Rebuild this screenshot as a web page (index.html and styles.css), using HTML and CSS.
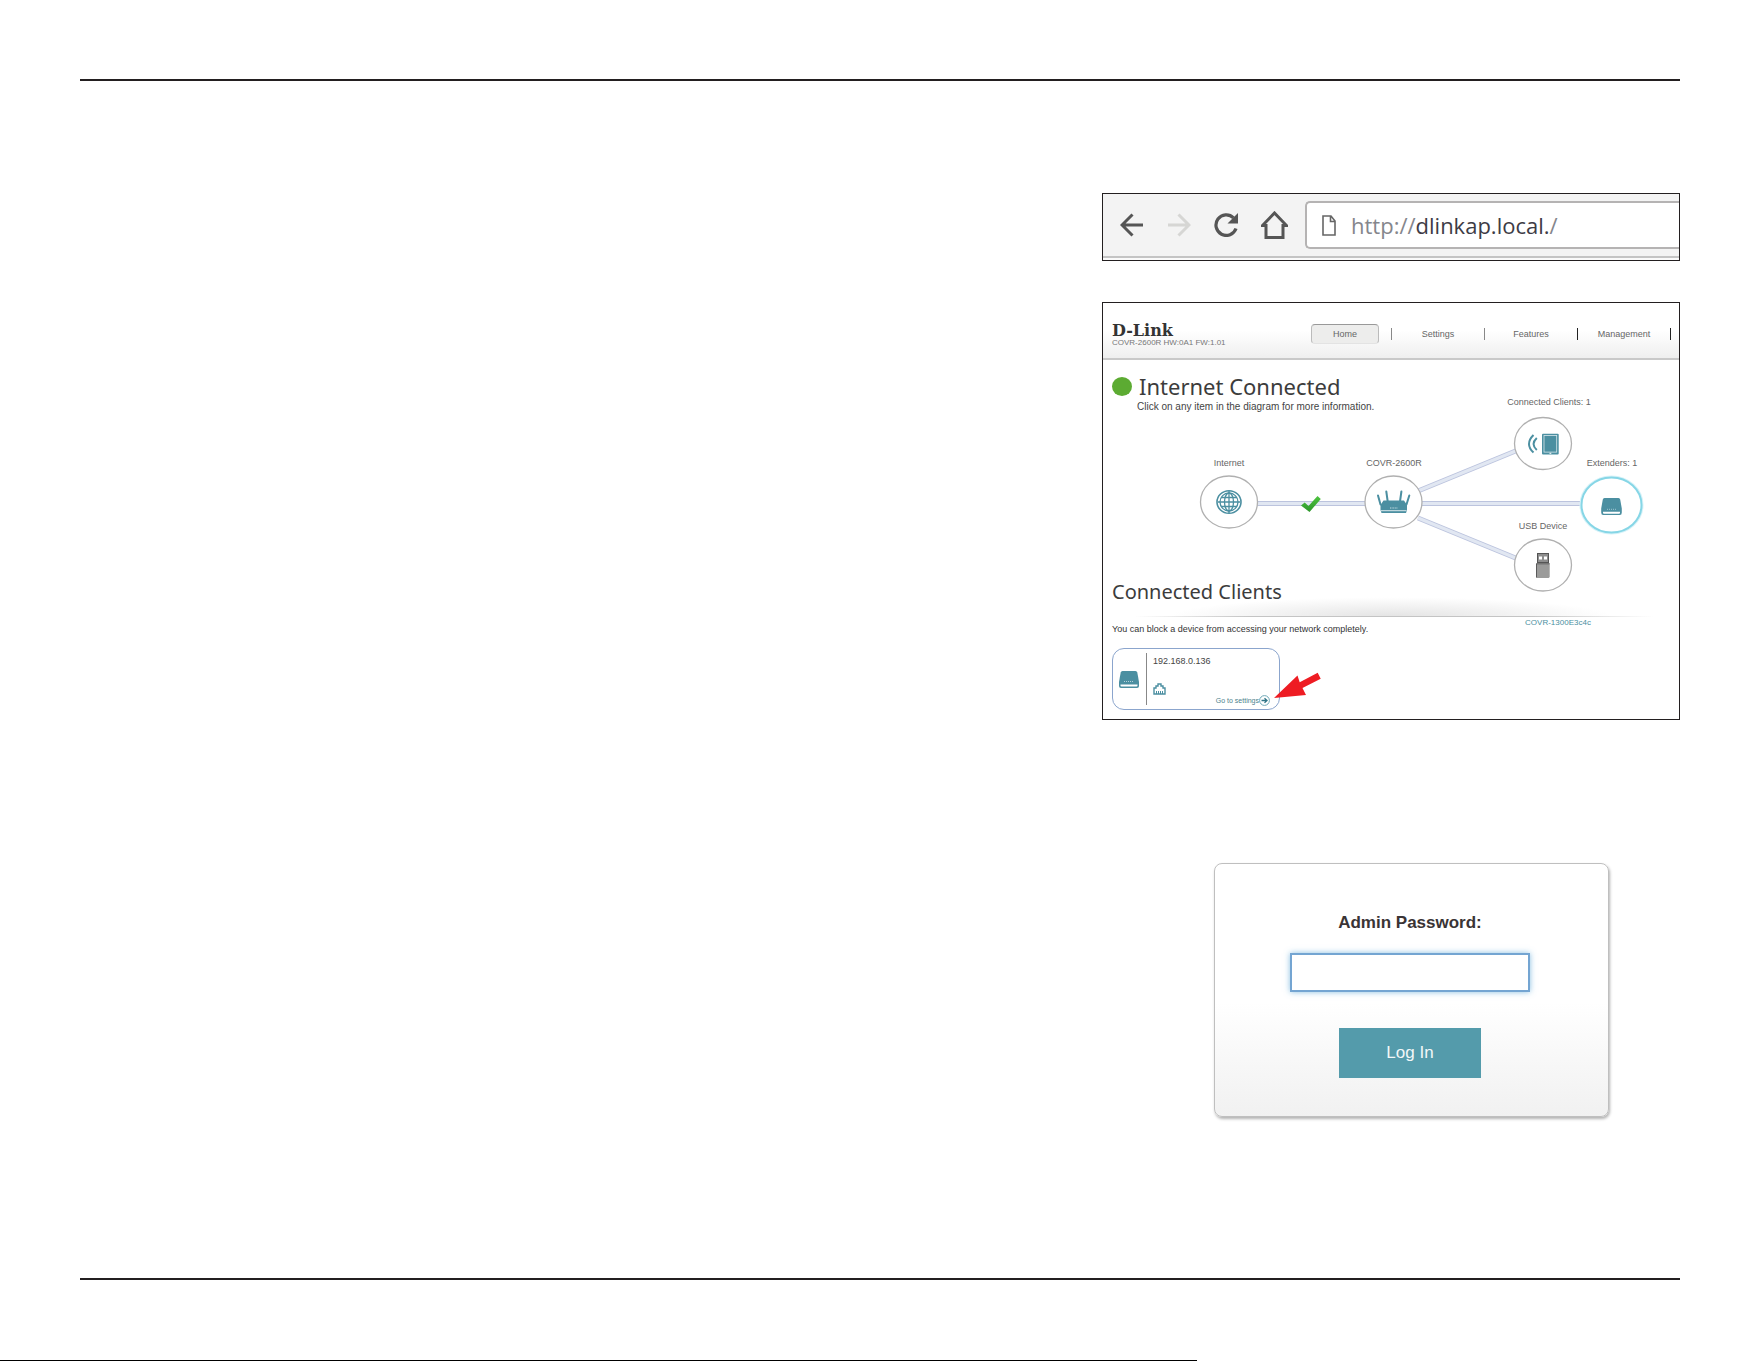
FILE: index.html
```html
<!DOCTYPE html>
<html lang="en">
<head>
    <meta charset="UTF-8">
    <title>D-Link COVR Setup</title>
    <link rel="stylesheet" href="styles.css">
</head>
<body>
    <main class="page">
        <div class="column">
            <!-- browser address bar -->
            <div class="browser">
                <div class="toolbar">
                    <div class="tools">
                        <button type="button" class="tool" aria-label="Back">
                            <svg width="24" height="24" viewBox="0 0 24 24"><path d="M23 12H2M12.500 1.500L2 12l10.500 10.500" fill="none" stroke="#555" stroke-width="3"/></svg>
                        </button>
                        <button type="button" class="tool" aria-label="Forward">
                            <svg width="24" height="24" viewBox="0 0 24 24"><path d="M1 12h21M11.500 1.500L22 12 11.500 22.500" fill="none" stroke="#d6d6d4" stroke-width="3"/></svg>
                        </button>
                        <button type="button" class="tool" aria-label="Reload">
                            <svg width="24" height="24" viewBox="0 0 24 24"><path d="M22 15.500A10.300 10.300 0 1 1 19.500 4.800" fill="none" stroke="#555" stroke-width="3.200"/><path d="M24 0v10.500H13.500z" fill="#555"/></svg>
                        </button>
                        <button type="button" class="tool" aria-label="Home page">
                            <svg width="27" height="28" viewBox="0 0 27 28"><path d="M1.500 14.500L13.500 2l12 12.500H22V26.500H5V14.500z" fill="none" stroke="#555" stroke-width="3"/></svg>
                        </button>
                    </div>
                    <div class="address">
                        <svg width="14" height="21" viewBox="0 0 14 21"><path d="M1 1h8l4 5v14H1zM8.500 1v5.500H13" fill="none" stroke="#666" stroke-width="1.600"/></svg>
                        <p class="url">http://<span class="host">dlinkap.local.</span>/</p>
                    </div>
                </div>
            </div>

            <!-- router home page -->
            <section class="router">
                <header class="router-header">
                    <div class="brand">
                        <div class="logo">D-Link</div>
                        <div class="version">COVR-2600R HW:0A1 FW:1.01</div>
                    </div>
                    <nav>
                        <ul class="menu">
                            <li><a href="#home" class="active">Home</a></li>
                            <li><a href="#settings">Settings</a></li>
                            <li class="dark"><a href="#features">Features</a></li>
                            <li class="dark"><a href="#management">Management</a></li>
                        </ul>
                    </nav>
                </header>
                <div class="router-body">
                    <h1 class="status"><span class="status-dot"></span>Internet Connected</h1>
                    <p class="hint">Click on any item in the diagram for more information.</p>
                    <h2 class="section-title">Connected Clients</h2>
                    <p class="note">You can block a device from accessing your network completely.</p>
                    <div class="client">
                        <div class="client-icon">
                            <svg width="20" height="17" viewBox="0 0 20 17"><path d="M3.500 0h13q1.500 0 1.800 1.500L20 11v4q0 2-2 2H2q-2 0-2-2v-4L1.700 1.500Q2 0 3.500 0z" fill="#4b8fa1"/><path d="M1.500 13.500h17v1q0 1-1 1h-15q-1 0-1-1z" fill="#fff"/><path d="M5 10.500h10" stroke="#b5d3da" stroke-width="1" stroke-dasharray="1 1"/></svg>
                        </div>
                        <div class="client-info">
                            <div>192.168.0.136</div>
                            <svg class="port" width="13" height="12" viewBox="0 0 13 12"><path d="M1 11V5h2V3h2V1h3v2h2v2h2v6z" fill="none" stroke="#4b8fa1" stroke-width="1.400"/><path d="M3.500 11V8M5.500 11V8M7.500 11V8M9.500 11V8" stroke="#4b8fa1"/></svg>
                            <a class="go" href="#settings">Go to settings<svg width="11" height="11" viewBox="0 0 11 11"><circle cx="5.500" cy="5.500" r="4.900" fill="#fff" stroke="#6ea7b5" stroke-width="1"/><path d="M2.500 5.500h5M5.500 3.200l2.500 2.300-2.500 2.300" fill="none" stroke="#2f7486" stroke-width="1.300"/></svg></a>
                        </div>
                    </div>
                </div>

                <!-- network diagram -->
                <svg class="diagram" viewBox="0 0 576 416">
                    <defs>
                        <linearGradient id="tick" x1="0" y1="0" x2="0" y2="1">
                            <stop offset="0" stop-color="#4ec43f"/>
                            <stop offset="1" stop-color="#2c962b"/>
                        </linearGradient>
                    </defs>
                    <g class="link-edge">
                        <path d="M154 200.500H263M319 200.500H479M315 188L415 147M315 215L415 256"/>
                    </g>
                    <g class="link-core">
                        <path d="M154 200.500H263M319 200.500H479M315 188L415 147M315 215L415 256"/>
                    </g>
                    <path d="M198 202.500l3.700-3 3.800 3.500 9-10 3.300 3L206.500 209z" fill="url(#tick)"/>

                    <a href="#internet">
                        <text class="label" x="126" y="163">Internet</text>
                        <ellipse class="node" cx="126" cy="199" rx="28.500" ry="26"/>
                        <g fill="none" stroke="#4b8fa1" stroke-width="1.300">
                            <ellipse cx="126" cy="199" rx="12" ry="11.300" stroke-width="1.600"/>
                            <ellipse cx="126" cy="199" rx="9" ry="9"/>
                            <ellipse cx="126" cy="199" rx="4.500" ry="9"/>
                            <path d="M126 188v22M115 199h22M118 194.500h16M118 203.500h16"/>
                        </g>
                    </a>
                    <a href="#router">
                        <text class="label" x="291" y="163">COVR-2600R</text>
                        <ellipse class="node" cx="290.500" cy="199" rx="28.500" ry="26"/>
                        <path d="M275 192.500l2.500 9M283.300 188.500l1.400 10M298.400 188.500l-1.400 10M306.300 192.500l-2.800 9" stroke="#4b8fa1" stroke-width="2" stroke-linecap="round"/>
                        <path d="M280.500 197.500h20.500l3 4.500v5l-1 3h-24.500l-1-3v-5z" fill="#4b8fa1"/>
                        <path d="M278 207.700h25.500" stroke="#fff" stroke-width=".8"/>
                        <path d="M287 205h8" stroke="#c3dbe1" stroke-width="1" stroke-dasharray="1 .6"/>
                    </a>
                    <a href="#clients">
                        <text class="label" x="446" y="102">Connected Clients: 1</text>
                        <ellipse class="node" cx="440" cy="140.500" rx="28.500" ry="26"/>
                        <path d="M430.500 132q-9 9 0 17.500M433.800 135q-6.500 6 0 12" fill="none" stroke="#4b8fa1" stroke-width="2"/>
                        <rect x="439" y="130.700" width="16.700" height="20.800" rx="1" fill="#4b8fa1"/>
                        <rect x="441" y="132.500" width="12.700" height="16.600" fill="none" stroke="#d7e7eb" stroke-width=".8"/>
                        <path d="M446.500 150.300h1.800" stroke="#fff"/>
                    </a>
                    <a href="#extenders">
                        <text class="label" x="509" y="163">Extenders: 1</text>
                        <ellipse class="node halo" cx="508.500" cy="202" rx="30" ry="27.500"/>
                        <ellipse class="node selected" cx="508.500" cy="202" rx="30" ry="27.500"/>
                        <path d="M501.500 195h14q1.500 0 1.700 1.500l1.600 9v4q0 2.500-2 2.500h-16.600q-2 0-2-2.500v-4l1.600-9q.2-1.500 1.700-1.500z" fill="#4b8fa1"/>
                        <path d="M500 208.700h17v1q0 1-1 1h-15q-1 0-1-1z" fill="#fff"/>
                        <path d="M504 206.300h9" stroke="#b5d3da" stroke-width=".8" stroke-dasharray="1 1"/>
                    </a>
                    <a href="#usb">
                        <text class="label" x="440" y="226">USB Device</text>
                        <ellipse class="node" cx="440" cy="262" rx="28.500" ry="26"/>
                        <rect x="434.500" y="250.500" width="11" height="9" fill="#8d8d8d" stroke="#555"/>
                        <path d="M436 253.500h3v3h-3zM441 253.500h3v3h-3z" fill="#fff"/>
                        <path d="M433 260.300h13.700V274l-1 1h-11.700l-1-1z" fill="#9b9b9a"/>
                        <path d="M433.500 274.500V260.800h13" fill="none" stroke="#5a5a5a"/>
                    </a>
                    <a href="#extender">
                        <text class="label extender-name" x="455" y="322">COVR-1300E3c4c</text>
                    </a>
                    <path d="M171 395l23.500-22.500 2.200 6.800 18-9.500 3 6-18.200 9.300L203 392z" fill="#ee1c23"/>
                </svg>
            </section>

            <!-- login form -->
            <form class="login">
                <label for="password">Admin Password:</label>
                <input type="password" id="password">
                <button type="submit">Log In</button>
            </form>
        </div>
    </main>
    <div class="edge"></div>
</body>
</html>
```

FILE: styles.css
```css
* {
    box-sizing: border-box;
}

body {
    display: flex;
    flex-direction: column;
    min-height: 100vh;
    margin: 0;
    font-family: "Liberation Sans", Arial, sans-serif;
    font-size: 9px;
    line-height: 12px;
    color: #444;
    background-color: #fff;
}

h1, h2, p, ul {
    margin: 0;
    padding: 0;
    font-weight: normal;
}

a {
    color: inherit;
    text-decoration: none;
}

svg {
    flex: none;
}

.page {
    flex: 1;
    display: grid;
    grid-template-columns: 1022fr 578fr;
    margin: 79px 81px 80px 80px;
    padding: 112px 0;
    border-top: 2px solid #231f20;
    border-bottom: 2px solid #231f20;
}

.column {
    grid-column: 2;
    min-width: 0;
}

/* browser address bar */
.browser {
    margin-bottom: 41px;
    padding-bottom: 2px;
    border: 1px solid #231f20;
    background-color: #fafafa;
}

.toolbar {
    display: flex;
    align-items: center;
    padding: 7px 0 7px 17px;
    border-bottom: 2px solid #c4c4c4;
    background-color: #f3f3f3;
}

.tools {
    display: flex;
    align-items: center;
    gap: 23px;
}

.tool {
    display: flex;
    padding: 0;
    border: none;
    background: none;
    cursor: pointer;
}

.address {
    flex: 1;
    display: flex;
    align-items: center;
    gap: 15px;
    height: 48px;
    margin-left: 17px;
    padding-left: 15px;
    border: 2px solid #b5b3b3;
    border-right: none;
    border-radius: 5px 0 0 5px;
    background-color: #fff;
}

.url {
    font-family: "Open Sans", "Noto Sans", sans-serif;
    font-size: 22px;
    line-height: 30px;
    color: #85868c;
}

.host {
    color: #3d3b45;
}

/* router home page */
.router {
    position: relative;
    margin-bottom: 143px;
    border: 1px solid #231f20;
}

.router-header {
    display: flex;
    justify-content: space-between;
    height: 57px;
    padding: 20px 8px 0 9px;
    border-bottom: 2px solid #c9c9c9;
    background: linear-gradient(#fff 50%, #efefef);
}

.logo {
    font-family: "DejaVu Serif", serif;
    font-size: 16px;
    font-weight: bold;
    line-height: 15px;
    color: #333;
}

.version {
    font-size: 8px;
    line-height: 10px;
    color: #777;
}

.menu {
    display: flex;
    margin-top: 1px;
    list-style: none;
}

.menu li {
    display: flex;
    align-items: center;
    width: 93px;
}

.menu li::after {
    content: "";
    width: 1px;
    height: 12px;
    background-color: #888;
}

.menu .dark::after {
    background-color: #222;
}

.menu a {
    flex: 1;
    height: 20px;
    margin: 0 12px;
    line-height: 20px;
    text-align: center;
    white-space: nowrap;
    color: #666;
}

.menu .active {
    border: 1px solid #bbb;
    border-top-color: #999;
    border-bottom-color: #e3e3e3;
    border-radius: 4px;
    line-height: 18px;
    background-color: #ededec;
}

.router-body {
    padding: 12px 9px 9px;
}

.status, .section-title {
    font-family: "Noto Sans", sans-serif;
    line-height: 28px;
    color: #3c3c3c;
}

.status {
    display: flex;
    align-items: center;
    gap: 7px;
    font-size: 22px;
}

.status-dot {
    width: 20px;
    height: 19px;
    border-radius: 50%;
    background-color: #5cab32;
}

.hint {
    padding-left: 25px;
    font-size: 10px;
    line-height: 14px;
}

.section-title {
    margin-top: 164px;
    padding-bottom: 11px;
    font-size: 20px;
    background:
        linear-gradient(90deg, transparent 4%, #c4c4c4 25%, #c4c4c4 75%, transparent 97%) bottom / 100% 1px no-repeat,
        radial-gradient(ellipse at 50% 100%, #e3e3e3, transparent 70%) bottom / 80% 20px no-repeat;
}

.note {
    margin-top: 6px;
    color: #333;
}

.client {
    display: flex;
    align-items: center;
    width: 168px;
    margin-top: 13px;
    padding: 4px 9px 4px 6px;
    border: 1px solid #8ba5cd;
    border-radius: 12px;
}

.client-icon {
    padding-right: 7px;
}

.client-icon svg, .port {
    display: block;
}

.client-info {
    flex: 1;
    height: 52px;
    padding: 2px 0 0 6px;
    border-left: 1px solid #888;
}

.port {
    margin-top: 16px;
}

.go {
    display: flex;
    align-items: center;
    justify-content: flex-end;
    font-size: 7px;
    line-height: 8px;
    color: #4b7f8c;
}

/* network diagram, laid over the page text */
.diagram {
    position: absolute;
    top: 0;
    left: 0;
    width: 100%;
    pointer-events: none;
}

.diagram a {
    pointer-events: auto;
}

.label {
    font-size: 9px;
    text-anchor: middle;
    fill: #666;
}

.extender-name {
    font-size: 8px;
    fill: #4b8fa1;
}

.node {
    fill: #fff;
    stroke: #b0b0b0;
    stroke-width: 1.3px;
}

.halo {
    stroke: #d6f2f8;
    stroke-width: 4px;
}

.selected {
    stroke: #86d6e6;
    stroke-width: 2px;
}

.link-edge {
    stroke: #bcc4de;
    stroke-width: 5px;
}

.link-core {
    stroke: #e1e7f2;
    stroke-width: 3px;
}

/* login form */
.login {
    display: flex;
    flex-direction: column;
    align-items: center;
    margin: 0 71px 0 112px;
    padding: 49px 3px 38px 0;
    border: 1px solid #bfbfbf;
    border-radius: 8px;
    box-shadow: 1px 2px 3px rgba(0, 0, 0, 0.3);
    background: linear-gradient(#fff 55%, #f1f1f1);
    font-size: 17px;
    line-height: 20px;
}

.login label {
    font-weight: bold;
    color: #3a3435;
}

.login input {
    width: 240px;
    height: 39px;
    margin: 20px 0 36px;
    padding: 0 10px;
    border: 2px solid #74a5d2;
    box-shadow: 0 0 6px rgba(90, 165, 215, 0.7);
    font: inherit;
    outline: none;
}

.login button {
    width: 142px;
    height: 50px;
    border: none;
    background-color: #549bab;
    color: #f2f7f8;
    font: inherit;
    cursor: pointer;
}

/* black strip along the bottom */
.edge {
    width: 68%;
    height: 1px;
    background-color: #000;
}
```
